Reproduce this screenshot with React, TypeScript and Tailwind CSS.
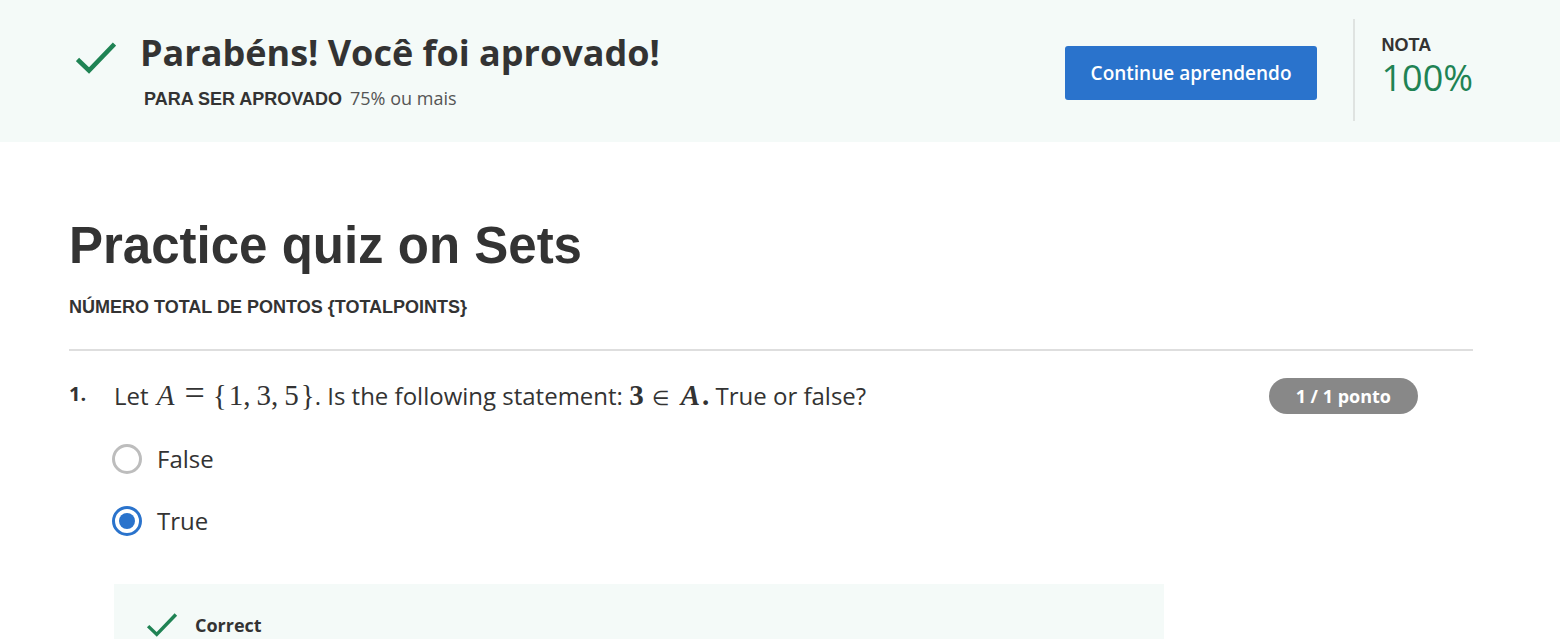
import { useState, type ReactNode } from "react";

const ANSWERS = ["False", "True"];

function CheckMark({ className }: { className: string }) {
  return (
    <svg viewBox="0 0 40 32" className={className} fill="none" aria-hidden="true">
      <path d="M1.5 17.5L13 28.5L38.5 2" stroke="#1f8354" strokeWidth="4.6" />
    </svg>
  );
}

function MathText({ children }: { children: ReactNode }) {
  return <span className="font-['Liberation_Serif',serif] text-[29px] leading-none">{children}</span>;
}

export default function App() {
  const [answer, setAnswer] = useState("True");

  return (
    <div className="flex min-h-screen flex-col bg-white font-['Open_Sans',sans-serif] text-[#333333]">
      <header className="flex items-start justify-between bg-[#f4faf8] pt-[19px] pr-[87px] pb-[21px] pl-19">
        <div className="flex pt-[11px]">
          <CheckMark className="mt-3 h-8 w-10" />
          <div className="ml-6">
            <h1 className="text-4xl leading-[46px] font-bold">Parabéns! Você foi aprovado!</h1>
            <p className="mt-2 flex items-baseline gap-2 pl-1 text-lg leading-7">
              <span className="font-['Liberation_Sans',sans-serif] font-bold">PARA SER APROVADO</span>
              <span className="text-[#555555]">75% ou mais</span>
            </p>
          </div>
        </div>
        <div className="flex">
          <button
            type="button"
            className="mt-[27px] mr-9 h-[54px] rounded-[3px] bg-[#2a73cc] px-[26px] text-[19px] font-semibold text-white"
          >
            Continue aprendendo
          </button>
          <div className="border-l-2 border-[#dfe3e1] pt-3.5 pb-[22px] pl-[26px]">
            <p className="font-['Liberation_Sans',sans-serif] text-lg leading-6 font-bold">NOTA</p>
            <p className="text-4xl leading-[42px] text-[#1f8354]">100%</p>
          </div>
        </div>
      </header>

      <main className="flex grow flex-col pr-[87px] pl-[69px]">
        <h2 className="mt-[72px] font-['Liberation_Sans',sans-serif] text-[51px] leading-[64px] font-bold">
          Practice quiz on Sets
        </h2>
        <p className="mt-[17px] font-['Liberation_Sans',sans-serif] text-lg leading-6 font-bold">
          NÚMERO TOTAL DE PONTOS {"{TOTALPOINTS}"}
        </p>
        <hr className="mt-[30px] border-t-2 border-[#dedede]" />

        <section className="flex grow pt-[27px]">
          <span className="w-[45px] shrink-0 pt-1 text-xl leading-6 font-bold">1.</span>
          <div className="flex grow flex-col">
            <div className="flex items-start justify-between pr-[55px]">
              <p id="question" className="text-2xl leading-9">
                Let{" "}
                <MathText>
                  <i className="mr-2.5 ml-0.5">A</i>
                  <span className="mr-2 text-4xl leading-0">=</span>
                  {"{"}
                  <span className="ml-0.5">1,</span>
                  <span className="ml-1.5">3,</span>
                  <span className="ml-1.5">5</span>
                  <span className="ml-0.5">{"}"}</span>
                </MathText>
                . Is the following statement:{" "}
                <MathText>
                  <span className="font-bold">3</span>
                  <span className="mr-3 ml-2 text-xl leading-0">∈</span>
                  <span className="font-bold">
                    <i className="mr-0.5">A</i>.
                  </span>
                </MathText>{" "}
                True or false?
              </p>
              <span className="h-9 rounded-full bg-[#888888] px-[27px] text-lg leading-9 font-bold text-white">
                1 / 1 ponto
              </span>
            </div>

            <div role="radiogroup" aria-labelledby="question" className="mt-[27px] flex flex-col gap-[26px]">
              {ANSWERS.map((option) => (
                <label key={option} className="flex h-9 items-center gap-[15px] text-2xl">
                  <input
                    type="radio"
                    name="answer"
                    value={option}
                    checked={answer === option}
                    onChange={() => setAnswer(option)}
                    className="-ml-0.5 size-[30px] appearance-none rounded-full border-3 border-[#bdbdbd] bg-white bg-clip-content p-1 checked:border-[#2a73cc] checked:bg-[#2a73cc]"
                  />
                  {option}
                </label>
              ))}
            </div>

            <div className="mt-[45px] mr-[309px] flex grow items-start bg-[#f4faf8] pt-[29px] pl-8">
              <CheckMark className="h-6 w-8" />
              <p className="ml-[17px] text-lg leading-6 font-bold">Correct</p>
            </div>
          </div>
        </section>
      </main>
    </div>
  );
}
